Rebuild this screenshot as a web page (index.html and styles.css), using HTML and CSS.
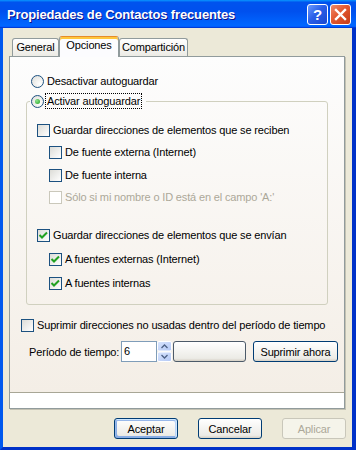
FILE: index.html
```html
<!DOCTYPE html>
<html lang="es">
  <head>
    <meta charset="UTF-8" />
    <meta name="viewport" content="width=device-width, initial-scale=1.0" />
    <link rel="stylesheet" href="styles.css">
    <title>Propiedades de Contactos frecuentes</title>
  </head>
  <body>
    <div class="window">
      <div class="titlebar">
        <span class="title">Propiedades de Contactos frecuentes</span>
        <div class="controls">
          <span class="ctl help">?</span>
          <span class="ctl close">
            <svg width="21" height="21" viewBox="0 0 21 21">
              <path d="M6 6 L15 15 M15 6 L6 15" stroke="#fff" stroke-width="2.4" stroke-linecap="square" />
            </svg>
          </span>
        </div>
      </div>

      <div class="client">
        <div class="tabs">
          <div class="tab tab-general">General</div>
          <div class="tab tab-options active">Opciones</div>
          <div class="tab tab-share">Compartición</div>
        </div>

        <div class="panel">
          <div class="page">
            <div class="row radio-row">
              <span class="radio"></span>
              <span class="label">Desactivar autoguardar</span>
            </div>

            <fieldset class="group">
              <legend>
                <span class="radio on"></span>
                <span class="focus">Activar autoguardar</span>
              </legend>

              <div class="row chk-row first">
                <span class="chk"></span>
                <span class="label">Guardar direcciones de elementos que se reciben</span>
              </div>
              <div class="row chk-row sub">
                <span class="chk"></span>
                <span class="label">De fuente externa (Internet)</span>
              </div>
              <div class="row chk-row sub mt10">
                <span class="chk"></span>
                <span class="label">De fuente interna</span>
              </div>
              <div class="row chk-row sub disabled">
                <span class="chk"></span>
                <span class="label">Sólo si mi nombre o ID está en el campo 'A:'</span>
              </div>

              <div class="row chk-row sent">
                <span class="chk on">
                  <svg width="11" height="11" viewBox="0 0 11 11"><path d="M1.5 5 L4 7.5 L9 2.5" fill="none" stroke="#21a121" stroke-width="2" /></svg>
                </span>
                <span class="label">Guardar direcciones de elementos que se envían</span>
              </div>
              <div class="row chk-row sub mt11">
                <span class="chk on">
                  <svg width="11" height="11" viewBox="0 0 11 11"><path d="M1.5 5 L4 7.5 L9 2.5" fill="none" stroke="#21a121" stroke-width="2" /></svg>
                </span>
                <span class="label">A fuentes externas (Internet)</span>
              </div>
              <div class="row chk-row sub mt11">
                <span class="chk on">
                  <svg width="11" height="11" viewBox="0 0 11 11"><path d="M1.5 5 L4 7.5 L9 2.5" fill="none" stroke="#21a121" stroke-width="2" /></svg>
                </span>
                <span class="label">A fuentes internas</span>
              </div>
            </fieldset>

            <div class="row purge-row">
              <span class="chk"></span>
              <span class="label">Suprimir direcciones no usadas dentro del período de tiempo</span>
            </div>

            <div class="period-row">
              <span class="period-label">Período de tiempo:</span>
              <span class="textbox">6</span>
              <span class="spinner">
                <svg width="15" height="21" viewBox="0 0 15 21">
                  <defs>
                    <linearGradient id="sp" x1="0" y1="0" x2="1" y2="1">
                      <stop offset="0" stop-color="#d9e5fd" />
                      <stop offset="1" stop-color="#b2c7f5" />
                    </linearGradient>
                  </defs>
                  <rect x="0.5" y="0.5" width="14" height="9.5" rx="1.5" fill="url(#sp)" stroke="#fff" />
                  <rect x="0.5" y="11" width="14" height="9.5" rx="1.5" fill="url(#sp)" stroke="#fff" />
                  <path d="M4.5 7 L7.5 4 L10.5 7" fill="none" stroke="#4d6185" stroke-width="1.3" />
                  <path d="M4.5 14 L7.5 17 L10.5 14" fill="none" stroke="#4d6185" stroke-width="1.3" />
                </svg>
              </span>
              <span class="blank"></span>
              <span class="btn wide">Suprimir ahora</span>
            </div>
          </div>
          <div class="page-foot"></div>
        </div>

        <div class="buttons">
          <span class="btn default">Aceptar</span>
          <span class="btn">Cancelar</span>
          <span class="btn off">Aplicar</span>
        </div>
      </div>
    </div>
  </body>
</html>
```

FILE: styles.css
```css
* {
  margin: 0;
  padding: 0;
  box-sizing: border-box;
}
body {
  font-family: "Liberation Sans", Arial, sans-serif;
  font-size: 11px;
  letter-spacing: -0.15px;
  color: #000;
  background: #fff;
}
.window {
  width: 356px;
  height: 450px;
  display: flex;
  flex-direction: column;
  background: #ece9d8;
}

/* title bar */
.titlebar {
  height: 28px;
  display: flex;
  align-items: center;
  padding: 1px 5px 0 7px;
  background: linear-gradient(180deg, #0997ff, #0053ee 8%, #0050ee 40%, #0066ff 88%, #0066ff 93%, #005bff 95%, #003dd7 96%, #003dd7);
}
.title {
  flex: 1;
  color: #fff;
  font-weight: bold;
  font-size: 13px;
  letter-spacing: -0.15px;
  text-shadow: 1px 1px #0f1089;
}
.controls {
  display: flex;
  gap: 2px;
}
.ctl {
  width: 21px;
  height: 21px;
  border: 1px solid #fff;
  border-radius: 3px;
  display: flex;
  align-items: center;
  justify-content: center;
}
.ctl svg {
  margin: -1px;
}
.help {
  background: linear-gradient(135deg, #6b9bff, #2a5fe8 45%, #1a48d0);
  color: #fff;
  font-weight: bold;
  font-size: 15px;
}
.close {
  background: linear-gradient(135deg, #f08a6b, #e2582f 45%, #c53b18);
}

/* client area */
.client {
  flex: 1;
  display: flex;
  flex-direction: column;
  border-style: solid;
  border-width: 0 4px 3px 3px;
  border-color: #0054e3 #0031c8 #0031c8 #0058ee;
  padding: 0 7px 0 6px;
}
.tabs {
  display: flex;
  align-items: flex-end;
  height: 20px;
  margin-top: 8px;
  padding-left: 3px;
  position: relative;
  z-index: 1;
}
.tab {
  height: 18px;
  border: 1px solid #919b9c;
  border-bottom: none;
  border-radius: 3px 3px 0 0;
  background: linear-gradient(#fff, #ecebe5);
  text-align: center;
  line-height: 16px;
}
.tab-general {
  width: 47px;
}
.tab-options {
  width: 60px;
}
.tab-share {
  width: 69px;
}
.tab.active {
  height: 21px;
  margin-bottom: -1px;
  background: #fcfcfe;
  border-top-color: #e68b2c;
  box-shadow: inset 0 2px #ffc73c;
  line-height: 14px;
  padding-top: 1px;
}

.panel {
  width: 336px;
  height: 353px;
  border: 1px solid #919b9c;
  box-shadow: 1px 1px 0 #c3c1b2;
  background: #fff;
  display: flex;
  flex-direction: column;
}
.page {
  height: 336px;
  border-bottom: 1px solid #a8a696;
  background: linear-gradient(#fdfdfd, #f4eee6);
}
.page-foot {
  flex: 1;
  background: #fff;
}

/* rows */
.row {
  display: flex;
  align-items: center;
  height: 13px;
  line-height: 13px;
  white-space: nowrap;
}
.row .label {
  margin-left: 3px;
}
.radio-row {
  margin-top: 18px;
  padding-left: 21px;
}
.radio {
  width: 13px;
  height: 13px;
  border-radius: 50%;
  border: 1px solid #1c5180;
  background: radial-gradient(circle at 70% 70%, #fff, #dcdcd7);
  display: flex;
  align-items: center;
  justify-content: center;
  flex-shrink: 0;
}
.radio.on::after {
  content: "";
  width: 5px;
  height: 5px;
  border-radius: 50%;
  background: radial-gradient(circle at 35% 35%, #8ee58e, #21a121);
}
.chk {
  width: 13px;
  height: 13px;
  border: 1px solid #1c5180;
  background: linear-gradient(135deg, #dcdcd7, #fff);
  flex-shrink: 0;
  display: flex;
  align-items: center;
  justify-content: center;
}
.disabled .chk {
  border-color: #cac8bb;
  background: #fff;
}
.disabled .label {
  color: #aca899;
}

.group {
  margin: 5px 0 0 16px;
  width: 302px;
  border: 1px solid #d0d0bf;
  border-radius: 3px;
  padding: 0 0 14px 10px;
}
.group legend {
  display: flex;
  align-items: center;
  height: 16px;
  margin-left: -7px;
  padding: 0 4px 0 1px;
}
.focus {
  margin-left: 1px;
  border: 1px dotted #000;
  padding: 0 1px;
  line-height: 14px;
}
.chk-row {
  margin-top: 9px;
}
.chk-row.first {
  margin-top: 15px;
}
.chk-row.sub {
  padding-left: 12px;
}
.chk-row.mt10 {
  margin-top: 10px;
}
.chk-row.mt11 {
  margin-top: 11px;
}
.chk-row.sent {
  margin-top: 25px;
}

.purge-row {
  margin-top: 14px;
  padding-left: 11px;
}
.period-row {
  display: flex;
  align-items: center;
  height: 21px;
  margin-top: 9px;
  padding-left: 19px;
}
.period-label {
  width: 92px;
  white-space: nowrap;
}
.textbox {
  width: 36px;
  height: 21px;
  border: 1px solid #7f9db9;
  background: #fff;
  padding-left: 2px;
  line-height: 19px;
}
.spinner {
  width: 15px;
  height: 21px;
  display: flex;
}
.blank {
  width: 73px;
  height: 21px;
  margin-left: 1px;
  border: 1px solid #4c5a69;
  border-radius: 3px;
  background: linear-gradient(#fff, #ecebe6 86%, #d6d0c5);
}

/* buttons */
.btn {
  width: 64px;
  height: 21px;
  border: 1px solid #003c74;
  border-radius: 3px;
  background: linear-gradient(#fff, #ecebe6 86%, #d6d0c5);
  display: flex;
  align-items: center;
  justify-content: center;
  white-space: nowrap;
}
.btn.wide {
  width: 85px;
  margin-left: 7px;
}
.btn.default {
  box-shadow: inset -1px 1px #cee7ff, inset 1px 2px #98b8ea, inset -2px 2px #bcd4f6, inset 1px -1px #89ade4, inset 2px -2px #89ade4;
}
.btn.off {
  border-color: #c9c7ba;
  background: #f5f4ea;
  color: #aca899;
}
.buttons {
  display: flex;
  justify-content: flex-end;
  gap: 20px;
  margin-top: 9px;
  margin-right: -1px;
}
```
